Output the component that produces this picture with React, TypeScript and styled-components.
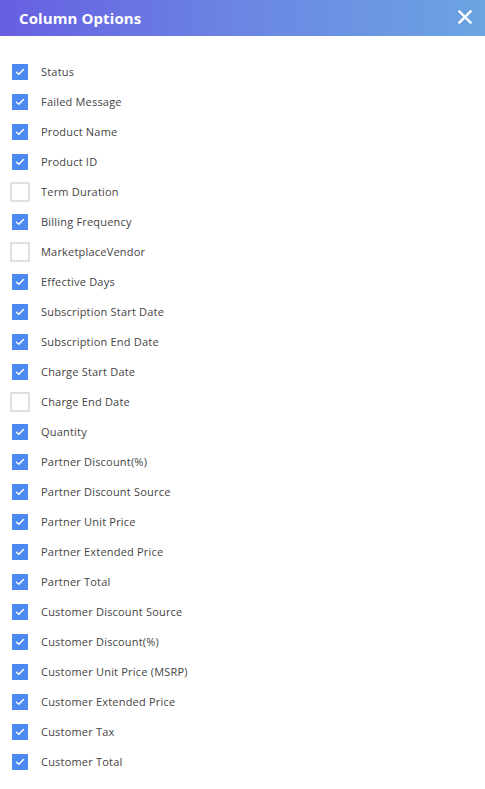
import React, { useState } from "react";
import styled, { createGlobalStyle } from "styled-components";

const GlobalStyle = createGlobalStyle`
    body {
        margin: 0;
        background: #ffffff;
        font-family: "Open Sans", "Liberation Sans", sans-serif;
    }
`;

const Panel = styled.div`
    width: 485px;
    min-height: 789px;
    background: #ffffff;
`;

const Header = styled.div`
    display: flex;
    align-items: center;
    justify-content: space-between;
    height: 36px;
    padding: 0 8px 0 19px;
    box-sizing: border-box;
    background: linear-gradient(90deg, #675fe2 0%, #6b86e3 50%, #6ba4e2 100%);
`;

const Title = styled.div`
    color: #ffffff;
    font-family: "Open Sans", sans-serif;
    font-weight: 700;
    font-size: 15px;
    letter-spacing: 0.1px;
    margin-top: -1px;
`;

const CloseButton = styled.button`
    display: flex;
    align-items: center;
    justify-content: center;
    width: 24px;
    height: 24px;
    padding: 0;
    border: none;
    background: transparent;
    cursor: pointer;
    margin-top: -2px;
`;

const List = styled.div`
    display: flex;
    flex-direction: column;
    padding: 21px 0 0 10px;
`;

const Row = styled.label`
    display: flex;
    align-items: center;
    height: 30px;
    gap: 11px;
    cursor: pointer;
`;

const Box = styled.span<{ $checked: boolean }>`
    display: flex;
    align-items: center;
    justify-content: center;
    width: 20px;
    height: 20px;
    box-sizing: border-box;
    border-radius: 1px;
    ${(p) =>
        p.$checked
            ? `background: #4a8af0; border: 2px solid #ffffff;`
            : `background: #ffffff; border: 2px solid #e0e0e0;`}
`;

const Label = styled.span`
    font-family: "Open Sans", sans-serif;
    font-size: 11px;
    color: #444444;
    letter-spacing: 0.2px;
    margin-top: -1px;
`;

const columns: [string, boolean][] = [
    ["Status", true],
    ["Failed Message", true],
    ["Product Name", true],
    ["Product ID", true],
    ["Term Duration", false],
    ["Billing Frequency", true],
    ["MarketplaceVendor", false],
    ["Effective Days", true],
    ["Subscription Start Date", true],
    ["Subscription End Date", true],
    ["Charge Start Date", true],
    ["Charge End Date", false],
    ["Quantity", true],
    ["Partner Discount(%)", true],
    ["Partner Discount Source", true],
    ["Partner Unit Price", true],
    ["Partner Extended Price", true],
    ["Partner Total", true],
    ["Customer Discount Source", true],
    ["Customer Discount(%)", true],
    ["Customer Unit Price (MSRP)", true],
    ["Customer Extended Price", true],
    ["Customer Tax", true],
    ["Customer Total", true],
];

export default function App() {
    const [state, setState] = useState(columns.map((c) => c[1]));

    return (
        <Panel>
            <GlobalStyle />
            <Header>
                <Title>Column Options</Title>
                <CloseButton aria-label="close">
                    <svg width="14" height="14" viewBox="0 0 14 14">
                        <path
                            d="M1.5 1.5 L12.5 12.5 M12.5 1.5 L1.5 12.5"
                            stroke="#ffffff"
                            strokeWidth="2.4"
                            strokeLinecap="square"
                        />
                    </svg>
                </CloseButton>
            </Header>
            <List>
                {columns.map(([name], i) => (
                    <Row
                        key={name}
                        onClick={() =>
                            setState((s) => s.map((v, j) => (j === i ? !v : v)))
                        }
                    >
                        <Box $checked={state[i]}>
                            {state[i] && (
                                <svg width="10" height="8" viewBox="0 0 10 8">
                                    <path
                                        d="M1.5 4.2 L3.8 6.2 L8.5 1.5"
                                        stroke="#ffffff"
                                        strokeWidth="1.5"
                                        fill="none"
                                        strokeLinecap="round"
                                        strokeLinejoin="round"
                                    />
                                </svg>
                            )}
                        </Box>
                        <Label>{name}</Label>
                    </Row>
                ))}
            </List>
        </Panel>
    );
}
